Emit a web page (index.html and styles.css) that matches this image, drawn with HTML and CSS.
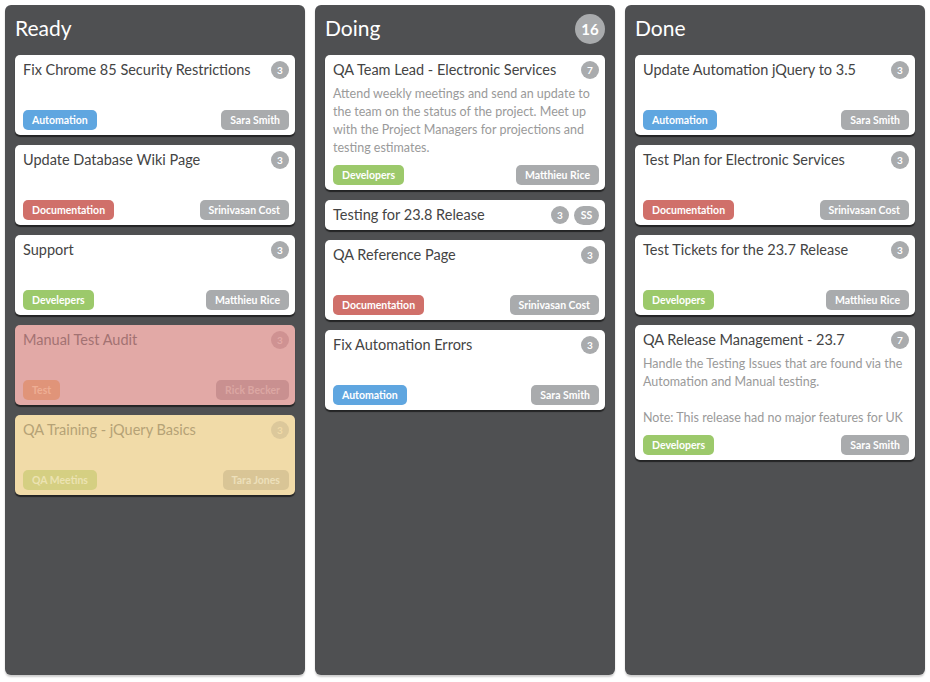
FILE: index.html
```html
<!DOCTYPE html>
<html lang="en">
<head>
    <meta charset="UTF-8">
    <title>Board</title>
    <link rel="stylesheet" href="styles.css">
</head>
<body>
    <div class="board">
        <div class="column">
            <div class="column-head"><h2>Ready</h2></div>
            <div class="card">
                <div class="card-top"><span class="title">Fix Chrome 85 Security Restrictions</span><span class="count">3</span></div>
                <div class="card-foot"><span class="tag blue">Automation</span><span class="tag gray">Sara Smith</span></div>
            </div>
            <div class="card">
                <div class="card-top"><span class="title">Update Database Wiki Page</span><span class="count">3</span></div>
                <div class="card-foot"><span class="tag red">Documentation</span><span class="tag gray">Srinivasan Cost</span></div>
            </div>
            <div class="card">
                <div class="card-top"><span class="title">Support</span><span class="count">3</span></div>
                <div class="card-foot"><span class="tag green">Develepers</span><span class="tag gray">Matthieu Rice</span></div>
            </div>
            <div class="card card-red">
                <div class="card-top"><span class="title">Manual Test Audit</span><span class="count">3</span></div>
                <div class="card-foot"><span class="tag orange">Test</span><span class="tag gray">Rick Becker</span></div>
            </div>
            <div class="card card-yellow">
                <div class="card-top"><span class="title">QA Training - jQuery Basics</span><span class="count">3</span></div>
                <div class="card-foot"><span class="tag olive">QA Meetins</span><span class="tag gray">Tara Jones</span></div>
            </div>
        </div>

        <div class="column">
            <div class="column-head"><h2>Doing</h2><span class="total">16</span></div>
            <div class="card">
                <div class="card-top"><span class="title">QA Team Lead - Electronic Services</span><span class="count">7</span></div>
                <p class="desc">Attend weekly meetings and send an update to the team on the status of the project. Meet up with the Project Managers for projections and testing estimates.</p>
                <div class="card-foot"><span class="tag green">Developers</span><span class="tag gray">Matthieu Rice</span></div>
            </div>
            <div class="card card-small">
                <div class="card-top"><span class="title">Testing for 23.8 Release</span><span class="count">3</span><span class="count initials">SS</span></div>
            </div>
            <div class="card">
                <div class="card-top"><span class="title">QA Reference Page</span><span class="count">3</span></div>
                <div class="card-foot"><span class="tag red">Documentation</span><span class="tag gray">Srinivasan Cost</span></div>
            </div>
            <div class="card">
                <div class="card-top"><span class="title">Fix Automation Errors</span><span class="count">3</span></div>
                <div class="card-foot"><span class="tag blue">Automation</span><span class="tag gray">Sara Smith</span></div>
            </div>
        </div>

        <div class="column">
            <div class="column-head"><h2>Done</h2></div>
            <div class="card">
                <div class="card-top"><span class="title">Update Automation jQuery to 3.5</span><span class="count">3</span></div>
                <div class="card-foot"><span class="tag blue">Automation</span><span class="tag gray">Sara Smith</span></div>
            </div>
            <div class="card">
                <div class="card-top"><span class="title">Test Plan for Electronic Services</span><span class="count">3</span></div>
                <div class="card-foot"><span class="tag red">Documentation</span><span class="tag gray">Srinivasan Cost</span></div>
            </div>
            <div class="card">
                <div class="card-top"><span class="title">Test Tickets for the 23.7 Release</span><span class="count">3</span></div>
                <div class="card-foot"><span class="tag green">Developers</span><span class="tag gray">Matthieu Rice</span></div>
            </div>
            <div class="card">
                <div class="card-top"><span class="title">QA Release Management - 23.7</span><span class="count">7</span></div>
                <p class="desc">Handle the Testing Issues that are found via the Automation and Manual testing.<br><br>Note: This release had no major features for UK</p>
                <div class="card-foot"><span class="tag green">Developers</span><span class="tag gray">Sara Smith</span></div>
            </div>
        </div>
    </div>
</body>
</html>
```

FILE: styles.css
```css
body {
    margin: 0;
    background: #fff;
    font-family: Lato, "Noto Sans", sans-serif;
}
.board {
    display: flex;
    gap: 10px;
    padding: 5px 5px 7px;
    height: 682px;
    box-sizing: border-box;
}
.column {
    flex: 1;
    background: #4f5052;
    border-radius: 6px;
    padding: 0 10px 10px;
    box-shadow: 0 2px 2px rgba(0, 0, 0, 0.2);
    display: flex;
    flex-direction: column;
    gap: 10px;
}
.column-head {
    height: 40px;
    padding-top: 4px;
    box-sizing: border-box;
    display: flex;
    align-items: center;
    justify-content: space-between;
}
.column-head h2 {
    margin: 0;
    color: #fff;
    font-size: 21px;
    font-weight: 400;
}
.total {
    width: 30px;
    height: 30px;
    margin-top: 4px;
    border-radius: 50%;
    background: #a9abad;
    color: #fff;
    font-size: 15px;
    font-weight: 700;
    display: flex;
    align-items: center;
    justify-content: center;
}
.card {
    background: #fff;
    border-radius: 5px;
    min-height: 80px;
    box-sizing: border-box;
    padding: 5px 6px 5px 8px;
    display: flex;
    flex-direction: column;
    box-shadow: 0 2px 1px rgba(0, 0, 0, 0.55);
}
.card-small {
    min-height: 30px;
    justify-content: center;
    padding-top: 4px;
    padding-bottom: 4px;
}
.card-top {
    display: flex;
    align-items: center;
    gap: 5px;
    min-height: 20px;
}
.title {
    flex: 1;
    font-size: 14.5px;
    color: #444;
    line-height: 20px;
}
.count {
    min-width: 18px;
    height: 18px;
    border-radius: 9px;
    background: #a9abad;
    color: #fff;
    font-size: 10px;
    font-weight: 700;
    display: flex;
    align-items: center;
    justify-content: center;
}
.initials {
    min-width: 25px;
    height: 19px;
    border-radius: 10px;
    font-size: 10.5px;
}
.desc {
    margin: 5px 0 0;
    font-size: 12.5px;
    line-height: 18px;
    color: #9a9a9a;
}
.card-foot {
    margin-top: auto;
    padding-top: 8px;
    display: flex;
    justify-content: space-between;
}
.tag {
    height: 20px;
    line-height: 20px;
    padding: 0 9px;
    border-radius: 5px;
    color: #fff;
    font-size: 10.5px;
    font-weight: 700;
}
.blue { background: #5fa6e0; }
.red { background: #d0706a; }
.green { background: #9cc96b; }
.gray { background: #a9abad; }
.orange { background: #e09479; }
.olive { background: #d5cf82; }
.card-red {
    background: #e2a9a6;
}
.card-red .title { color: #a27272; }
.card-red .count { background: #cf9292; color: #e2a9a6; }
.card-red .tag.gray { background: #c99090; color: #dca7a3; }
.card-red .tag.orange { color: #eeae94; }
.card-yellow {
    background: #f1dba8;
}
.card-yellow .title { color: #b5a276; }
.card-yellow .count { background: #dcc89b; color: #f1dba8; }
.card-yellow .tag.gray { background: #d9c596; color: #ede0bb; }
.card-yellow .tag.olive { color: #ece3b2; }
```
